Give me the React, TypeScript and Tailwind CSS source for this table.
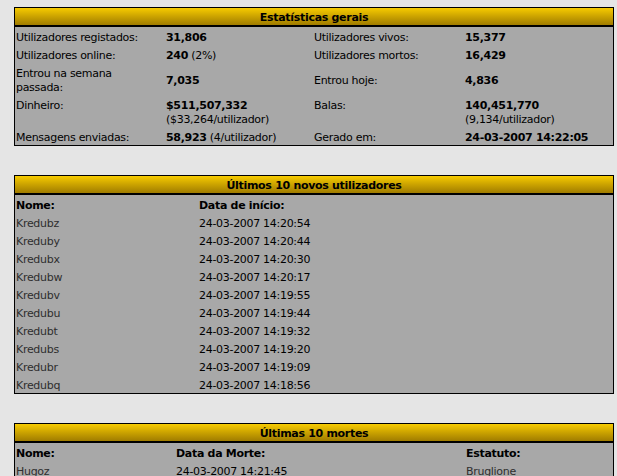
import React from 'react';

type Cell = { text: React.ReactNode; bold?: boolean; sub?: string; extra?: string };

const font = "font-['DejaVu_Sans',sans-serif] text-[11px] leading-[14px] tracking-[-0.3px]";

const Header: React.FC<{ title: string }> = ({ title }) => (
  <div className="h-[19px] pt-[2px] box-border bg-gradient-to-b from-[#f7cb00] to-[#a07c00] border-b-2 border-black flex items-center justify-center font-bold text-black">
    {title}
  </div>
);

const statRows: { cells: Cell[]; top?: boolean }[] = [
  {
    cells: [
      { text: 'Utilizadores registados:' },
      { text: '31,806', bold: true },
      { text: 'Utilizadores vivos:' },
      { text: '15,377', bold: true },
    ],
  },
  {
    cells: [
      { text: 'Utilizadores online:' },
      { text: '240', bold: true, extra: ' (2%)' },
      { text: 'Utilizadores mortos:' },
      { text: '16,429', bold: true },
    ],
  },
  {
    cells: [
      {
        text: (
          <>
            Entrou na semana
            <br />
            passada:
          </>
        ),
      },
      { text: '7,035', bold: true },
      { text: 'Entrou hoje:' },
      { text: '4,836', bold: true },
    ],
  },
  {
    top: true,
    cells: [
      { text: 'Dinheiro:' },
      { text: '$511,507,332', bold: true, sub: '($33,264/utilizador)' },
      { text: 'Balas:' },
      { text: '140,451,770', bold: true, sub: '(9,134/utilizador)' },
    ],
  },
  {
    cells: [
      { text: 'Mensagens enviadas:' },
      { text: '58,923', bold: true, extra: ' (4/utilizador)' },
      { text: 'Gerado em:' },
      { text: '24-03-2007 14:22:05', bold: true },
    ],
  },
];

const newUsers = [
  ['Kredubz', '24-03-2007 14:20:54'],
  ['Kreduby', '24-03-2007 14:20:44'],
  ['Kredubx', '24-03-2007 14:20:30'],
  ['Kredubw', '24-03-2007 14:20:17'],
  ['Kredubv', '24-03-2007 14:19:55'],
  ['Kredubu', '24-03-2007 14:19:44'],
  ['Kredubt', '24-03-2007 14:19:32'],
  ['Kredubs', '24-03-2007 14:19:20'],
  ['Kredubr', '24-03-2007 14:19:09'],
  ['Kredubq', '24-03-2007 14:18:56'],
];

const deaths = [['Hugoz', '24-03-2007 14:21:45', 'Bruglione']];

export default function App() {
  return (
    <div className={`min-h-[476px] bg-[#e5e5e5] pt-[7px] pb-8 ${font} text-black`}>
      {/* Estatísticas gerais */}
      <div className="ml-[14px] w-[600px] border border-black">
        <Header title="Estatísticas gerais" />
        <div className="bg-[#a8a8a8]">
          {statRows.map((row, i) => (
            <div
              key={i}
              className={`grid grid-cols-[150px_148px_151px_148px] pt-[4px] ${row.top ? 'items-start' : 'items-center'}`}
            >
              {row.cells.map((c, j) => (
                <div key={j} className="pl-[1px]">
                  <span className={c.bold ? 'font-bold' : ''}>{c.text}</span>
                  {c.extra}
                  {c.sub && <div>{c.sub}</div>}
                </div>
              ))}
            </div>
          ))}
        </div>
      </div>

      {/* Últimos 10 novos utilizadores */}
      <div className="ml-[14px] mt-[29px] w-[600px] border border-black">
        <Header title="Últimos 10 novos utilizadores" />
        <div className="bg-[#a8a8a8]">
          <div className="grid grid-cols-[183px_1fr] pt-[4px] font-bold">
            <div className="pl-[1px]">Nome:</div>
            <div className="pl-[1px]">Data de início:</div>
          </div>
          {newUsers.map(([name, date]) => (
            <div key={name} className="grid grid-cols-[183px_1fr] pt-[4px]">
              <div className="pl-[1px] text-[#2e2e2e]">{name}</div>
              <div className="pl-[1px]">{date}</div>
            </div>
          ))}
        </div>
      </div>

      {/* Últimas 10 mortes */}
      <div className="ml-[14px] mt-[29px] w-[600px] border border-black">
        <Header title="Últimas 10 mortes" />
        <div className="bg-[#a8a8a8]">
          <div className="grid grid-cols-[160px_290px_1fr] pt-[4px] font-bold">
            <div className="pl-[1px]">Nome:</div>
            <div className="pl-[1px]">Data da Morte:</div>
            <div className="pl-[1px]">Estatuto:</div>
          </div>
          {deaths.map(([name, date, status]) => (
            <div key={name} className="grid grid-cols-[160px_290px_1fr] pt-[4px]">
              <div className="pl-[1px] text-[#2e2e2e]">{name}</div>
              <div className="pl-[1px]">{date}</div>
              <div className="pl-[1px] text-[#2e2e2e]">{status}</div>
            </div>
          ))}
        </div>
      </div>
    </div>
  );
}
